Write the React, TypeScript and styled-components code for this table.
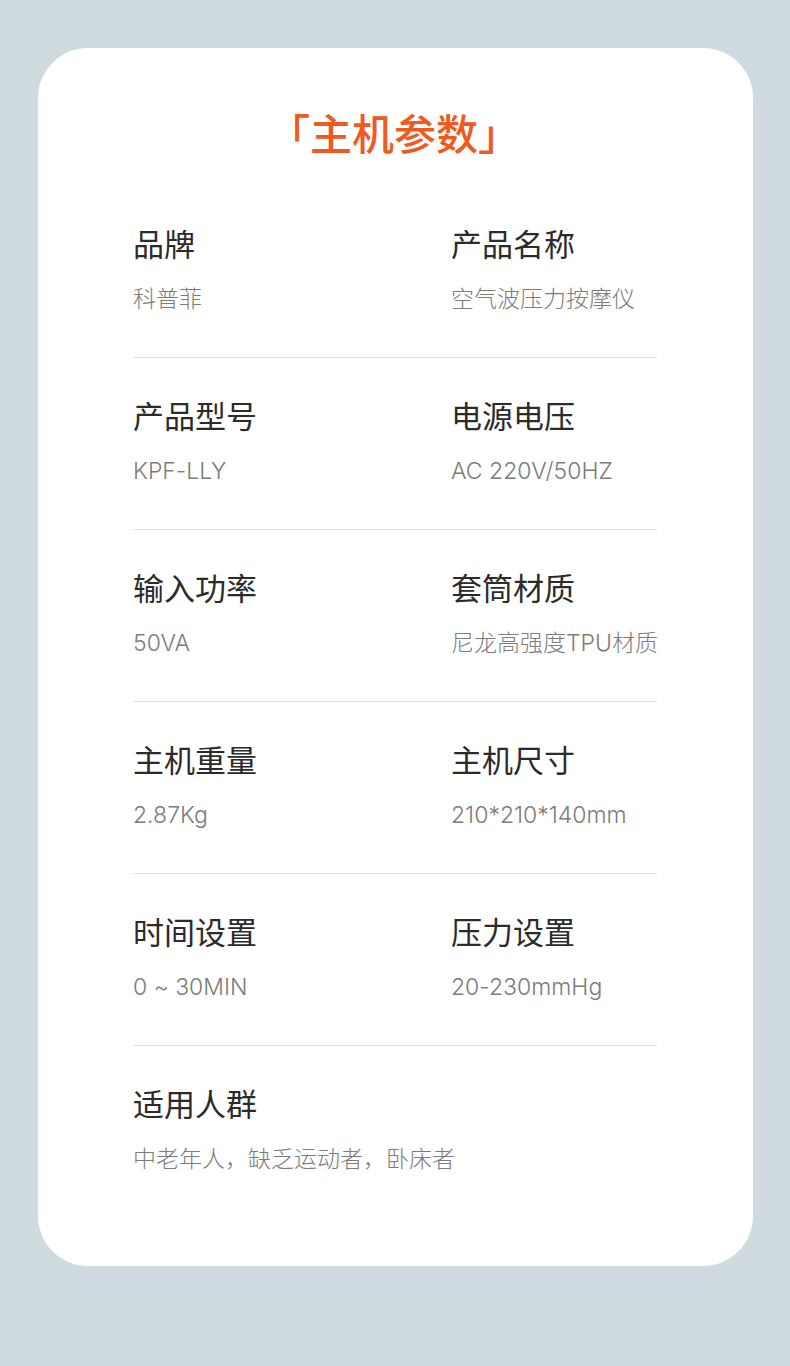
import React from 'react'
import styled, { createGlobalStyle } from 'styled-components'

type Spec = {
  label: string,
  value: string
}

const rows: Spec[][] = [
  [{ label: '品牌', value: '科普菲' }, { label: '产品名称', value: '空气波压力按摩仪' }],
  [{ label: '产品型号', value: 'KPF-LLY' }, { label: '电源电压', value: 'AC 220V/50HZ' }],
  [{ label: '输入功率', value: '50VA' }, { label: '套筒材质', value: '尼龙高强度TPU材质' }],
  [{ label: '主机重量', value: '2.87Kg' }, { label: '主机尺寸', value: '210*210*140mm' }],
  [{ label: '时间设置', value: '0 ~ 30MIN' }, { label: '压力设置', value: '20-230mmHg' }],
  [{ label: '适用人群', value: '中老年人，缺乏运动者，卧床者' }]
]

export const App = () => {
  return (
    <Page>
      <GlobalStyle />
      <Card>
        <Title>「主机参数」</Title>
        <List>
          {rows.map((row, i) => (
            <Row key={i} last={i === rows.length - 1}>
              {row.map(item => (
                <Cell key={item.label}>
                  <Label>{item.label}</Label>
                  <Value>{item.value}</Value>
                </Cell>
              ))}
            </Row>
          ))}
        </List>
      </Card>
    </Page>
  )
}

export default App

const GlobalStyle = createGlobalStyle`
  body {
    margin: 0;
    background: #d0dbdf;
    font-family: "Noto Sans CJK SC", "Noto Sans", sans-serif;
  }
`

const Page = styled.div`
  width: 790px;
  height: 1366px;
  padding: 48px 37px 0 38px;
  box-sizing: border-box;
  background: #d0dbdf;
`

const Card = styled.div`
  background: #ffffff;
  border-radius: 50px;
  height: 1218px;
  padding: 58px 96px 0 95px;
  box-sizing: border-box;
`

const Title = styled.div`
  text-align: center;
  font-size: 42px;
  line-height: 52px;
  color: #f15a1e;
  font-weight: 500;
  margin-left: -2px;
`

const List = styled.div`
  margin-top: 67px;
`

const Row = styled.div<{ last?: boolean }>`
  display: grid;
  grid-template-columns: 318px 1fr;
  padding: 0 0 43px;
  margin-bottom: 39px;
  border-bottom: ${p => p.last ? 'none' : '1px solid #e2e2e2'};
`

const Cell = styled.div`
  display: flex;
  flex-direction: column;
  white-space: nowrap;
`

const Label = styled.div`
  font-size: 31px;
  line-height: 36px;
  color: #2b2b2b;
  font-weight: 400;
`

const Value = styled.div`
  margin-top: 24px;
  font-family: Inter, "Noto Sans CJK SC", sans-serif;
  font-feature-settings: "calt" 0;
  font-size: 23px;
  line-height: 29px;
  color: #7c7c7c;
  font-weight: 300;
`
